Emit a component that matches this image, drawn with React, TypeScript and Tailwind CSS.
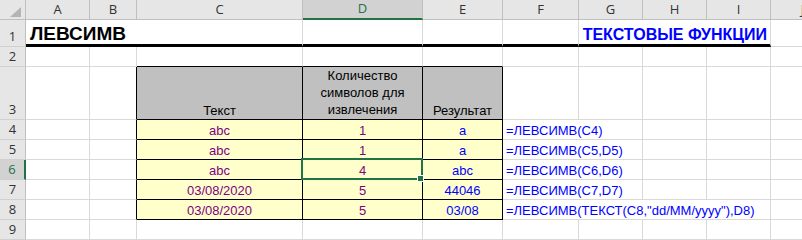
import clsx from "clsx";
import type { ReactNode } from "react";

type Row = { n: number; text: string; count: string; result: string; formula: string };

const rows: Row[] = [
  { n: 4, text: "abc", count: "1", result: "a", formula: "=ЛЕВСИМВ(C4)" },
  { n: 5, text: "abc", count: "1", result: "a", formula: "=ЛЕВСИМВ(C5,D5)" },
  { n: 6, text: "abc", count: "4", result: "abc", formula: "=ЛЕВСИМВ(C6,D6)" },
  { n: 7, text: "03/08/2020", count: "5", result: "44046", formula: "=ЛЕВСИМВ(C7,D7)" },
  { n: 8, text: "03/08/2020", count: "5", result: "03/08", formula: '=ЛЕВСИМВ(ТЕКСТ(C8,"dd/MM/yyyy"),D8)' },
];

const letters = ["A", "B", "C", "D", "E", "F", "G", "H", "I", "J"];

function Cell({
  children,
  className,
  rb,
  bb,
  thick,
}: {
  children?: ReactNode;
  className?: string;
  rb?: boolean;
  bb?: boolean;
  thick?: boolean;
}) {
  return (
    <div
      className={clsx(
        "flex items-end whitespace-nowrap border-r text-[13px] leading-[15px]",
        thick ? "border-b-[3px]" : "border-b pb-px",
        rb ? "border-r-black" : "border-r-[#d9d9d9]",
        bb || thick ? "border-b-black" : "border-b-[#d9d9d9]",
        className ?? "px-[3px]"
      )}
    >
      {children}
    </div>
  );
}

function RowHead({ n, active }: { n: number; active?: boolean }) {
  return (
    <div
      className={clsx(
        "flex items-end justify-center border-b border-b-[#d0d0d0] pb-px font-['Open_Sans',sans-serif] text-[13px] leading-[17px]",
        active
          ? "border-r-2 border-r-[#217346] bg-[#d2d2d2] text-[#217346]"
          : "border-r border-r-[#bfbfbf] bg-[#e6e6e6] text-[#333]"
      )}
    >
      {n}
    </div>
  );
}

export default function App() {
  return (
    <div className="h-[240px] w-[802px] overflow-hidden bg-white">
      <div className="grid w-[835px] grid-cols-[26px_64px_47px_166px_120px_80px_76px_64px_64px_64px_64px] grid-rows-[20px_27px_20px_53px_20px_20px_20px_20px_20px_20px] font-['Liberation_Sans',Arial,sans-serif] text-black">
        {/* corner + column letters */}
        <div className="flex items-end justify-end border-r border-b border-r-[#bfbfbf] border-b-[#bfbfbf] bg-[#e6e6e6] pr-[4px] pb-[2px]">
          <svg width="11" height="10" viewBox="0 0 11 10">
            <path d="M11 0 L11 10 L0 10 Z" fill="#b4b4b4" />
          </svg>
        </div>
        {letters.map((l) => (
          <div
            key={l}
            className={clsx(
              "flex items-center justify-center border-r border-r-[#bfbfbf] font-['Open_Sans',sans-serif] text-[13px]",
              l === "D"
                ? "border-b-2 border-b-[#217346] bg-[#d2d2d2] text-[#217346]"
                : "border-b border-b-[#bfbfbf] bg-[#e6e6e6] text-[#333]"
            )}
          >
            {l}
          </div>
        ))}

        {/* row 1: titles */}
        <RowHead n={1} />
        <Cell thick className="col-span-3 pl-[4px] text-[19px] font-bold leading-[21px]">
          ЛЕВСИМВ
        </Cell>
        <Cell thick />
        <Cell thick />
        <Cell thick />
        <Cell thick className="col-span-3 justify-end pr-[3px] text-[16px] font-bold leading-[18px] text-[#0000ff]">
          ТЕКСТОВЫЕ ФУНКЦИИ
        </Cell>
        <Cell />

        {/* row 2 */}
        <RowHead n={2} />
        <Cell />
        <Cell />
        <Cell bb />
        <Cell bb />
        <Cell bb />
        <Cell />
        <Cell />
        <Cell />
        <Cell />
        <Cell />

        {/* row 3: table header */}
        <RowHead n={3} />
        <Cell />
        <Cell rb />
        <Cell rb bb className="justify-center bg-[#c0c0c0]">
          Текст
        </Cell>
        <Cell rb bb className="justify-center bg-[#c0c0c0] pb-0 text-center leading-[17px]">
          <span>
            Количество
            <br />
            символов для
            <br />
            извлечения
          </span>
        </Cell>
        <Cell rb bb className="justify-center bg-[#c0c0c0]">
          Результат
        </Cell>
        <Cell />
        <Cell />
        <Cell />
        <Cell />
        <Cell />

        {/* rows 4-8 */}
        {rows.map((r) => (
          <div key={r.n} className="contents">
            <RowHead n={r.n} active={r.n === 6} />
            <Cell />
            <Cell rb />
            <Cell rb bb className="justify-center bg-[#ffffcc] text-[#800080]">
              {r.text}
            </Cell>
            <Cell rb bb className="relative justify-center bg-[#ffffcc] text-[#800080]">
              {r.count}
              {r.n === 6 && (
                <>
                  <div className="absolute -top-[2px] -right-px -bottom-px -left-[2px] z-10 border-2 border-[#217346]" />
                  <div className="absolute -right-[2px] -bottom-[3px] z-20 h-[7px] w-[7px] border border-white bg-[#217346]" />
                </>
              )}
            </Cell>
            <Cell rb bb className="justify-center bg-[#ffffcc] text-[#0000ff]">
              {r.result}
            </Cell>
            {r.n === 8 ? (
              <Cell className="col-span-4 px-[3px] text-[#0000ff]">{r.formula}</Cell>
            ) : (
              <>
                <Cell className="col-span-2 px-[3px] text-[#0000ff]">{r.formula}</Cell>
                <Cell />
                <Cell />
              </>
            )}
            <Cell />
          </div>
        ))}

        {/* row 9 */}
        <RowHead n={9} />
        {letters.map((l) => (
          <Cell key={l} />
        ))}
      </div>
    </div>
  );
}
